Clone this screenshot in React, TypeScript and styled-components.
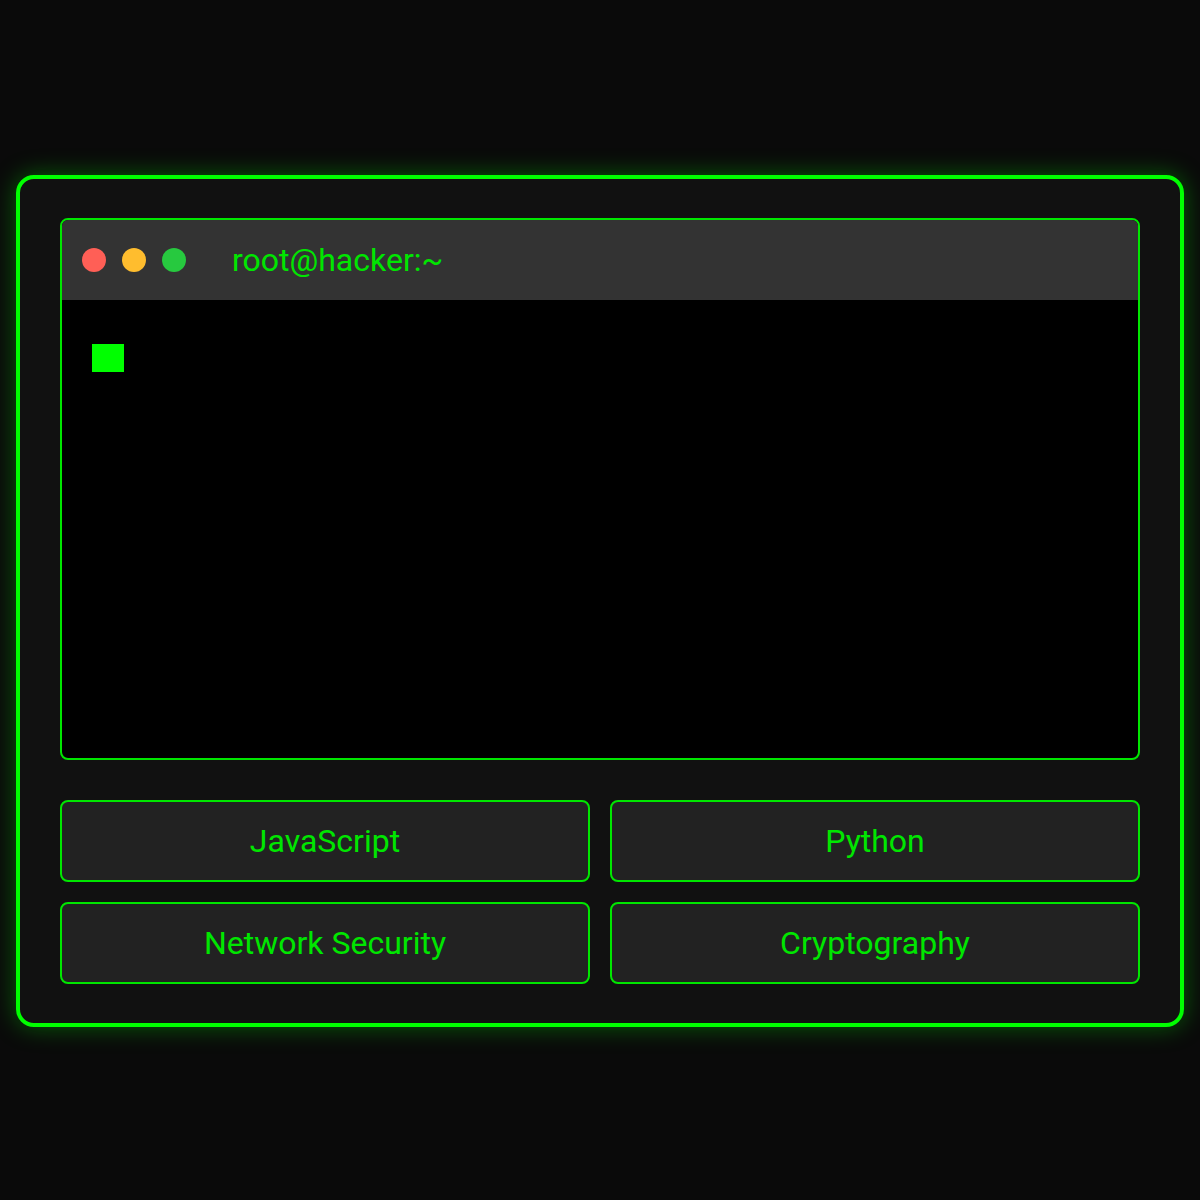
import styled, { createGlobalStyle } from "styled-components"

const GlobalStyle = createGlobalStyle`
    html, body {
        margin: 0;
        padding: 0;
        background-color: #0a0a0a;
    }
    body {
        font-family: Roboto, "Noto Sans", sans-serif;
    }
`

const Page = styled.div`
    min-height: 100vh;
    display: flex;
    align-items: center;
    justify-content: center;
    padding: 2px 16px 0;
    box-sizing: border-box;
`

const Card = styled.div`
    width: 100%;
    box-sizing: border-box;
    background-color: #111111;
    border: 4px solid #00ff00;
    border-radius: 18px;
    padding: 39px 40px;
    box-shadow: 0 0 24px rgba(0, 255, 0, 0.35);
`

const Terminal = styled.div`
    border: 2px solid #00e600;
    border-radius: 8px;
    overflow: hidden;
    background-color: #000;
`

const TitleBar = styled.div`
    height: 80px;
    background-color: #333333;
    display: flex;
    align-items: center;
    padding-left: 20px;
`

const Dot = styled.span<{ $color: string }>`
    width: 24px;
    height: 24px;
    border-radius: 50%;
    background-color: ${(p) => p.$color};
    margin-right: 16px;
`

const Title = styled.span`
    margin-left: 30px;
    color: #00e600;
    font-size: 32px;
`

const Body = styled.div`
    height: 458px;
    padding: 44px 30px;
    box-sizing: border-box;
`

const Cursor = styled.div`
    width: 32px;
    height: 28px;
    background-color: #00ff00;
`

const ButtonGrid = styled.div`
    margin-top: 40px;
    display: grid;
    grid-template-columns: 1fr 1fr;
    gap: 20px;
`

const SkillButton = styled.button`
    height: 82px;
    background-color: #222222;
    border: 2px solid #00e600;
    border-radius: 8px;
    color: #00e600;
    font-family: Roboto, "Noto Sans", sans-serif;
    font-size: 32px;
    cursor: pointer;
`

const skills = ["JavaScript", "Python", "Network Security", "Cryptography"]

export default function App() {
    return (
        <>
            <GlobalStyle />
            <Page>
                <Card>
                    <Terminal>
                        <TitleBar>
                            <Dot $color="#ff5f56" />
                            <Dot $color="#ffbd2e" />
                            <Dot $color="#27c93f" />
                            <Title>root@hacker:~</Title>
                        </TitleBar>
                        <Body>
                            <Cursor />
                        </Body>
                    </Terminal>
                    <ButtonGrid>
                        {skills.map((s) => (
                            <SkillButton key={s}>{s}</SkillButton>
                        ))}
                    </ButtonGrid>
                </Card>
            </Page>
        </>
    )
}
